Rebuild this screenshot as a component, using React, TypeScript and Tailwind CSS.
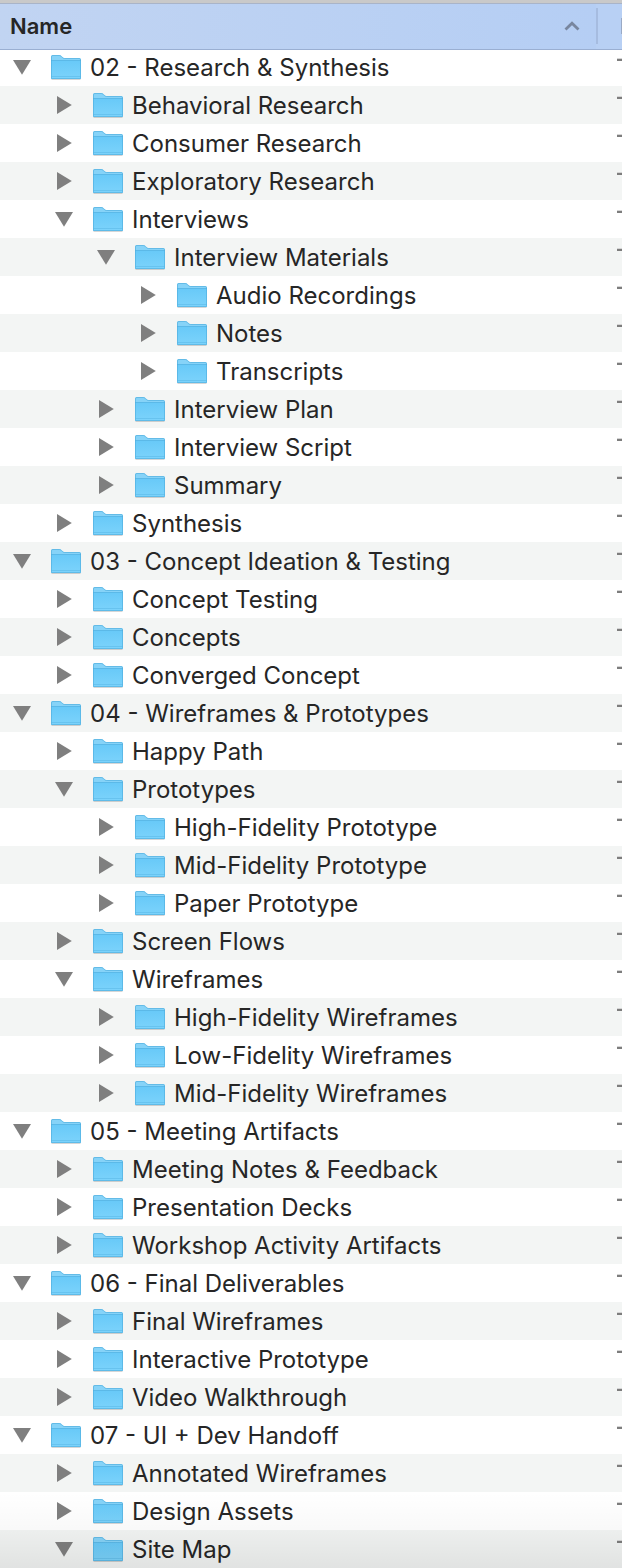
import { useState } from "react";

type Folder = { name: string; open?: boolean; children?: Folder[] };

const f = (name: string): Folder => ({ name });

const TREE: Folder[] = [
  {
    name: "02 - Research & Synthesis",
    open: true,
    children: [
      f("Behavioral Research"),
      f("Consumer Research"),
      f("Exploratory Research"),
      {
        name: "Interviews",
        open: true,
        children: [
          {
            name: "Interview Materials",
            open: true,
            children: [f("Audio Recordings"), f("Notes"), f("Transcripts")],
          },
          f("Interview Plan"),
          f("Interview Script"),
          f("Summary"),
        ],
      },
      f("Synthesis"),
    ],
  },
  {
    name: "03 - Concept Ideation & Testing",
    open: true,
    children: [f("Concept Testing"), f("Concepts"), f("Converged Concept")],
  },
  {
    name: "04 - Wireframes & Prototypes",
    open: true,
    children: [
      f("Happy Path"),
      {
        name: "Prototypes",
        open: true,
        children: [f("High-Fidelity Prototype"), f("Mid-Fidelity Prototype"), f("Paper Prototype")],
      },
      f("Screen Flows"),
      {
        name: "Wireframes",
        open: true,
        children: [f("High-Fidelity Wireframes"), f("Low-Fidelity Wireframes"), f("Mid-Fidelity Wireframes")],
      },
    ],
  },
  {
    name: "05 - Meeting Artifacts",
    open: true,
    children: [f("Meeting Notes & Feedback"), f("Presentation Decks"), f("Workshop Activity Artifacts")],
  },
  {
    name: "06 - Final Deliverables",
    open: true,
    children: [f("Final Wireframes"), f("Interactive Prototype"), f("Video Walkthrough")],
  },
  {
    name: "07 - UI + Dev Handoff",
    open: true,
    children: [f("Annotated Wireframes"), f("Design Assets"), { name: "Site Map", open: true }],
  },
];

type Row = { id: string; name: string; level: number; open: boolean };

const INDENT = ["pl-[13px]", "pl-[55px]", "pl-[97px]", "pl-[139px]"];

function flatten(nodes: Folder[], toggled: Set<string>, level = 0, prefix = ""): Row[] {
  return nodes.flatMap((node) => {
    const id = `${prefix}/${node.name}`;
    const open = Boolean(node.open) !== toggled.has(id);
    const row = { id, name: node.name, level, open };
    return open && node.children ? [row, ...flatten(node.children, toggled, level + 1, id)] : [row];
  });
}

function Disclosure({ open }: { open: boolean }) {
  return (
    <svg viewBox="0 0 18 18" className="block size-[18px] fill-[#7f7f7f]" aria-hidden="true">
      {open ? <path d="M0 2h18L9 16.8z" /> : <path d="M2 0v18L16.8 9z" />}
    </svg>
  );
}

function FolderIcon() {
  return (
    <svg viewBox="0 0 32 26" className="h-[26px] w-8 shrink-0" aria-hidden="true">
      <path d="M1.5 25.3h29" stroke="#000" strokeOpacity=".16" strokeWidth="1.4" />
      <path
        d="M1 2.500Q1 1 2.500 1H9.500q1.200 0 2 .9l1.300 1.300q.7.800 1.700.8h15Q31 4 31 5.500V24q0 1-1 1H2q-1 0-1-1z"
        fill="#86d3f8"
      />
      <path d="M1 6.500h30V24q0 1-1 1H2q-1 0-1-1z" fill="url(#folder-front)" />
      <path d="M1 6.500h30" stroke="#5bb9e8" strokeWidth="1" />
      <path d="M1.500 22.500h29" stroke="#5cb9e8" strokeWidth="1" strokeOpacity=".6" />
      <path
        d="M1.500 24.500V2.800q0-1.300 1.300-1.300h6.500q1.100 0 1.900.9l1.200 1.200q.8.900 1.900.9h14.900q1.300 0 1.300 1.300v18.700z"
        fill="none"
        stroke="#4dacdc"
        strokeOpacity=".6"
      />
    </svg>
  );
}

export default function App() {
  const [toggled, setToggled] = useState<Set<string>>(new Set());
  const [descending, setDescending] = useState(false);

  const toggle = (id: string) =>
    setToggled((prev) => {
      const next = new Set(prev);
      if (!next.delete(id)) next.add(id);
      return next;
    });

  const rows = flatten(descending ? [...TREE].reverse() : TREE, toggled);

  return (
    <main className="relative w-full overflow-hidden bg-white font-['Inter','Liberation_Sans',sans-serif] text-[#262626]">
      <svg className="absolute size-0" aria-hidden="true">
        <linearGradient id="folder-front" x1="0" y1="0" x2="0" y2="1">
          <stop offset="0" stopColor="#68c9f8" />
          <stop offset="1" stopColor="#7cd3fb" />
        </linearGradient>
      </svg>
      <table className="w-full table-fixed border-collapse">
        <thead>
          <tr>
            <th scope="col" className="p-0">
              <button
                type="button"
                onClick={() => setDescending(!descending)}
                className="flex h-[50px] w-full items-center justify-between border-t-3 border-b border-t-[#c9c9c9] border-b-[#9aafd2] bg-linear-to-r from-[#c1d4f2] to-[#b5cef4] pr-4 pl-[10px] text-[22px] leading-7 font-semibold shadow-[inset_0_1px_0_#a9b4c8]"
              >
                Name
                <svg
                  viewBox="0 0 16 10"
                  className={descending ? "h-[10px] w-4 rotate-180" : "h-[10px] w-4"}
                  fill="none"
                  stroke="#78869f"
                  strokeWidth="2.8"
                  aria-hidden="true"
                >
                  <path d="M1.5 8.5 8 2.2l6.5 6.3" />
                </svg>
              </button>
            </th>
            <th scope="col" aria-label="Details" className="w-[26px] p-0">
              <div className="flex h-[50px] items-center justify-between border-t-3 border-b border-t-[#c9c9c9] border-b-[#9aafd2] bg-[#b8d0f4] shadow-[inset_0_1px_0_#a9b4c8]">
                <span className="h-9 w-0.5 bg-[#a6bce0]" />
                <span className="h-4 w-px bg-[#9aaac5]" />
              </div>
            </th>
          </tr>
        </thead>
        <tbody>
          {rows.map((row) => (
            <tr key={row.id} className="group even:bg-[#f3f5f4]">
              <td className="p-0">
                <div
                  className={`flex h-[38px] items-center group-first:h-9 group-first:pb-0.5 ${INDENT[row.level]}`}
                >
                  <button
                    type="button"
                    aria-expanded={row.open}
                    aria-label={`Toggle ${row.name}`}
                    onClick={() => toggle(row.id)}
                    className="mr-[19px] shrink-0"
                  >
                    <Disclosure open={row.open} />
                  </button>
                  <FolderIcon />
                  <span className="ml-2 pt-0.5 text-2xl leading-7 whitespace-nowrap">{row.name}</span>
                </div>
              </td>
              <td className="p-0">
                <div className="flex h-[38px] justify-end pt-[10px] group-first:h-9 group-first:pt-2">
                  <span className="h-[3px] w-[5px] border-t border-[#d5d5d5] bg-[#7d7d7d]" />
                </div>
              </td>
            </tr>
          ))}
        </tbody>
      </table>
      <div className="pointer-events-none absolute inset-x-0 bottom-0 h-[76px] bg-linear-to-b from-transparent via-black/[0.025] to-black/[0.075]" />
    </main>
  );
}
